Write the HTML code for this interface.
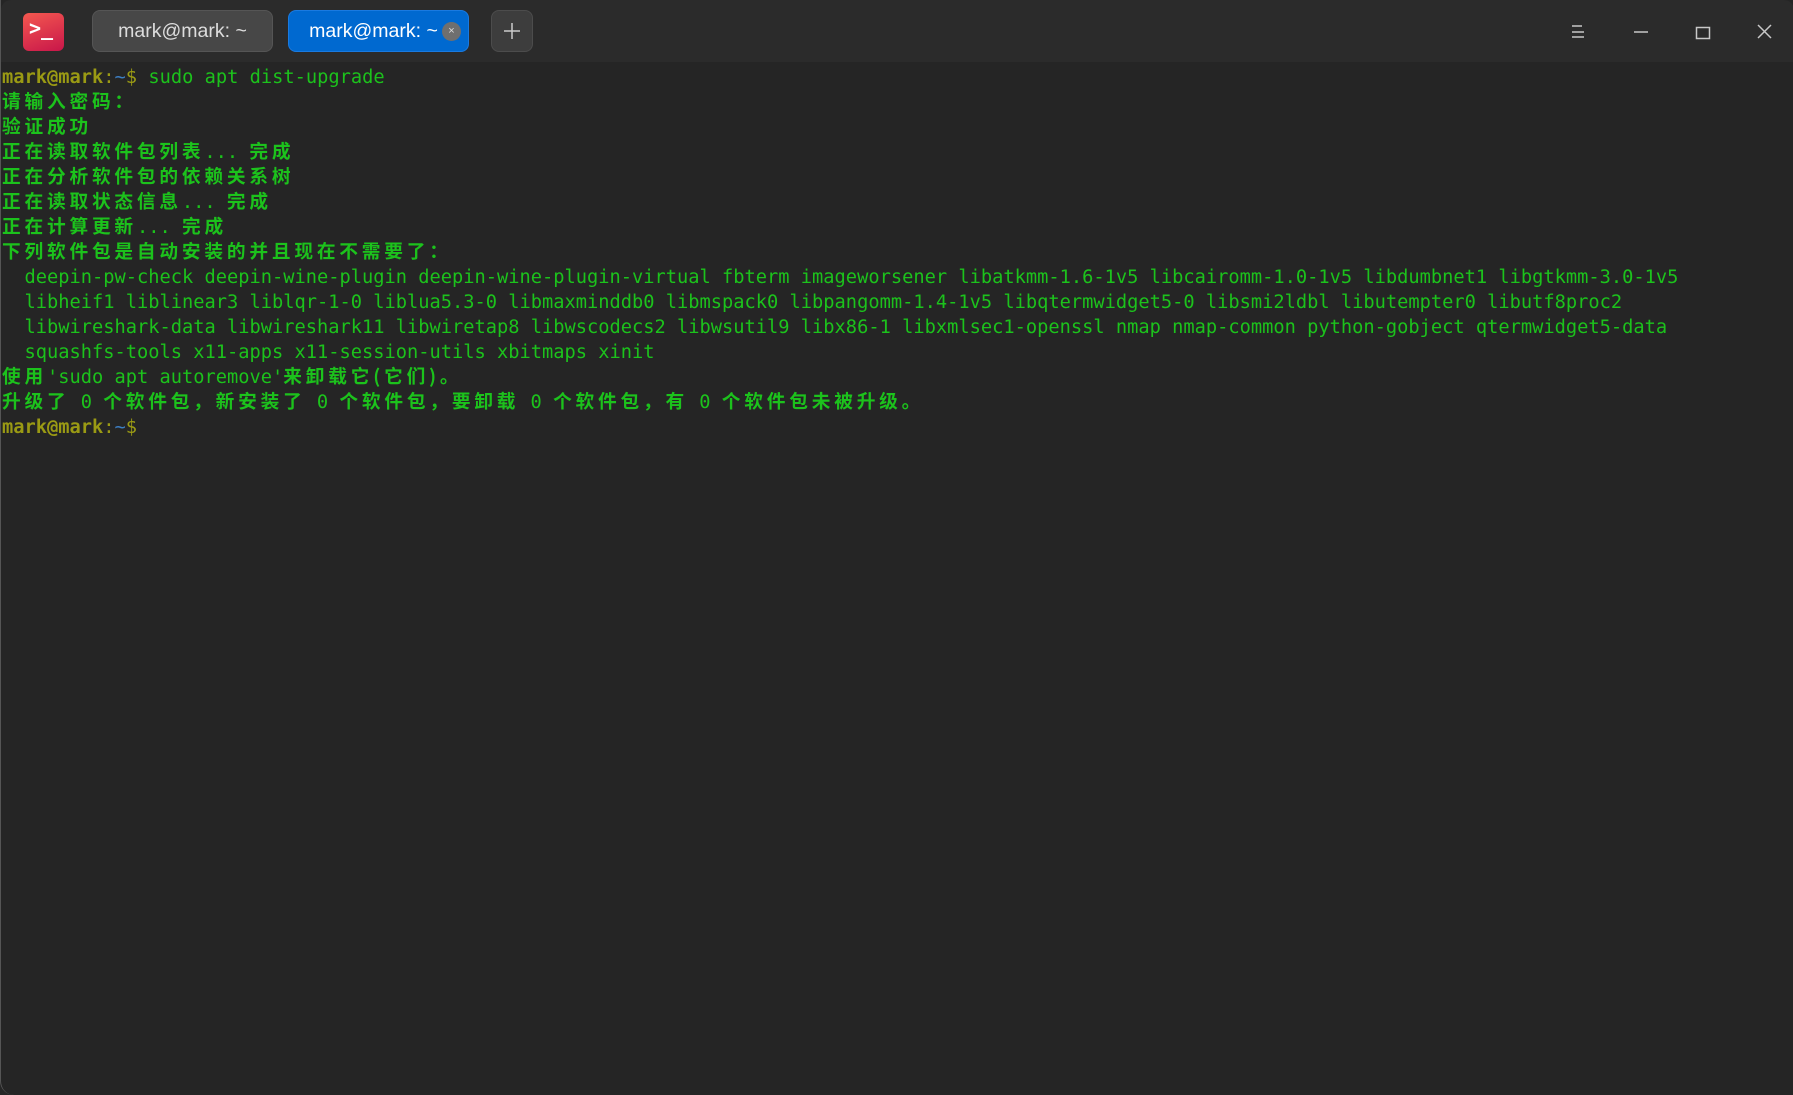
<!DOCTYPE html>
<html><head><meta charset="utf-8"><style>
html,body{margin:0;padding:0;background:#262626;width:1793px;height:1095px;overflow:hidden}
.win{position:absolute;left:0;top:0;width:1793px;height:1095px;background:#252525;border-radius:0 0 0 14px;border-left:1px solid #555;box-sizing:border-box}
.title{position:absolute;left:0;top:0;width:1793px;height:62px;background:#2b2b2b;border-radius:10px 10px 0 0}
.icon{position:absolute;left:22px;top:13px;width:41px;height:38px;border-radius:6px;background:linear-gradient(160deg,#f4584f,#c8164a);}
.icon span{position:absolute;left:6px;top:3px;color:#fff;font:bold 20px "DejaVu Sans Mono",monospace}
.tab{position:absolute;top:10px;height:42px;width:181px;border-radius:8px;font:19.5px "Liberation Sans",sans-serif;color:#ddd;display:flex;align-items:center;justify-content:center;box-sizing:border-box}
.t1{left:91px;background:#474747;border:1px solid #555}
.t2{left:287px;background:#0069d0;color:#fff;border:1px solid #1a7ae0}
.x{position:absolute;right:7px;top:11px;width:19px;height:19px;border-radius:50%;background:#6f6f6f;color:#ddd;font-size:11px;line-height:19px;text-align:center}
.plus{position:absolute;left:490px;top:10px;width:42px;height:42px;border-radius:8px;background:#3d3d3d;border:1px solid #4c4c4c;box-sizing:border-box}
.term{position:absolute;left:1px;top:65px;font:18.7px "DejaVu Sans Mono",monospace;color:#1cc21c}
.term div{height:25px;line-height:25px;white-space:pre;overflow:visible}
.c{font-family:"Noto Sans CJK SC",sans-serif;letter-spacing:3.8px;font-weight:bold;line-height:1;vertical-align:baseline}
.u{color:#9a9a14;font-weight:bold}.o{color:#9a9a14}.b{color:#3d7fc4}
</style></head><body><div class="win">
<div class="title">
<div class="icon"><span>&gt;_</span></div>
<div class="tab t1">mark@mark: ~</div>
<div class="tab t2"><span style="margin-right:10px">mark@mark: ~</span><div class="x">×</div></div>
<div class="plus"><svg width="42" height="42" style="position:absolute;left:-1px;top:-1px"><path d="M21 13v16M13 21h16" stroke="#ccc" stroke-width="1.5"/></svg></div>
<svg width="1793" height="62" style="position:absolute;left:0;top:0">
<g stroke="#c8c8c8" stroke-width="1.5" fill="none">
<path d="M1571 26h10M1571 32h12M1571 37h12"/>
<path d="M1633 32h14"/>
<rect x="1695.5" y="27.5" width="13" height="11"/>
<path d="M1757 25l13 13M1770 25l-13 13"/>
</g></svg>
</div>
<div class="term">
<div><span class="u">mark@mark</span><span class="o">:</span><span class="b">~</span><span class="o">$</span> sudo apt dist-upgrade</div>
<div><span class="c">请输入密码：</span></div>
<div><span class="c">验证成功</span></div>
<div><span class="c">正在读取软件包列表</span>... <span class="c">完成</span></div>
<div><span class="c">正在分析软件包的依赖关系树</span></div>
<div><span class="c">正在读取状态信息</span>... <span class="c">完成</span></div>
<div><span class="c">正在计算更新</span>... <span class="c">完成</span></div>
<div><span class="c">下列软件包是自动安装的并且现在不需要了：</span></div>
<div>  deepin-pw-check deepin-wine-plugin deepin-wine-plugin-virtual fbterm imageworsener libatkmm-1.6-1v5 libcairomm-1.0-1v5 libdumbnet1 libgtkmm-3.0-1v5</div>
<div>  libheif1 liblinear3 liblqr-1-0 liblua5.3-0 libmaxminddb0 libmspack0 libpangomm-1.4-1v5 libqtermwidget5-0 libsmi2ldbl libutempter0 libutf8proc2</div>
<div>  libwireshark-data libwireshark11 libwiretap8 libwscodecs2 libwsutil9 libx86-1 libxmlsec1-openssl nmap nmap-common python-gobject qtermwidget5-data</div>
<div>  squashfs-tools x11-apps x11-session-utils xbitmaps xinit</div>
<div><span class="c">使用</span>'sudo apt autoremove'<span class="c">来卸载它(它们)。</span></div>
<div><span class="c">升级了</span> 0 <span class="c">个软件包，新安装了</span> 0 <span class="c">个软件包，要卸载</span> 0 <span class="c">个软件包，有</span> 0 <span class="c">个软件包未被升级。</span></div>
<div><span class="u">mark@mark</span><span class="o">:</span><span class="b">~</span><span class="o">$</span></div>
</div>
</div></body></html>
